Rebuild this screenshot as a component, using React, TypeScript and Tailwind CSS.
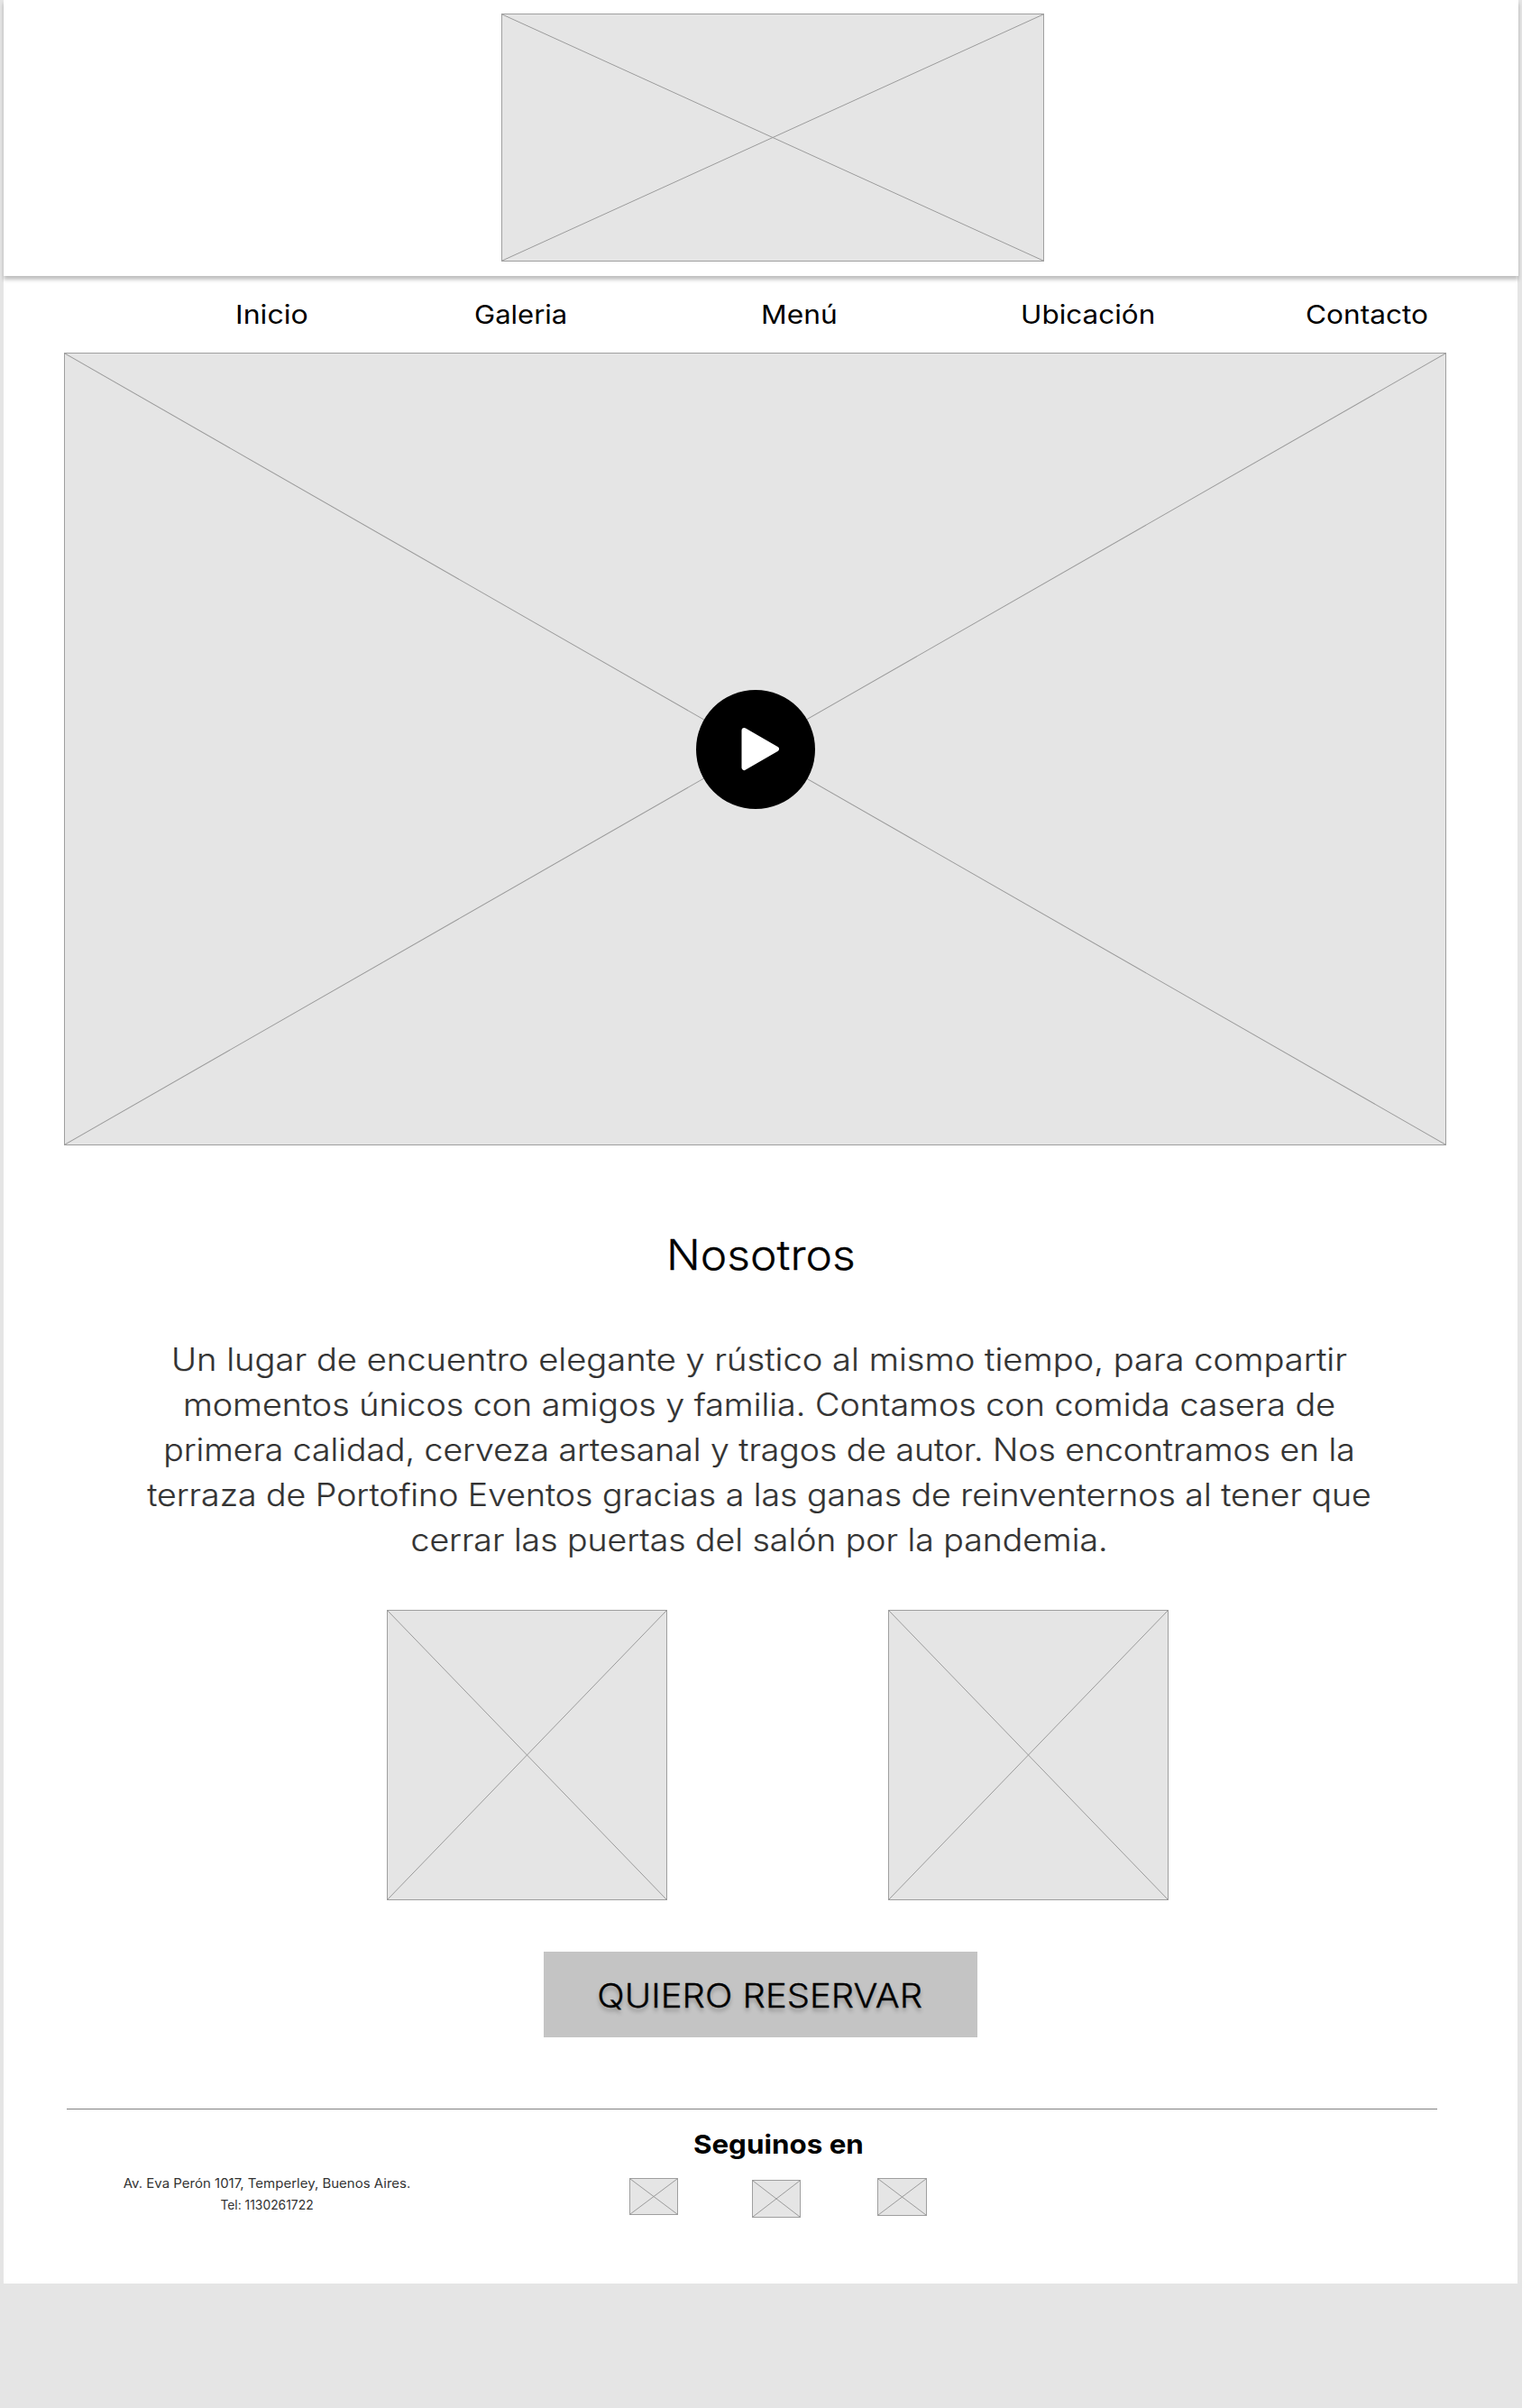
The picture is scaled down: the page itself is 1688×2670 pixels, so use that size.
import { clsx } from "clsx";

function Placeholder({ className }: { className: string }) {
  return (
    <div className={clsx("shrink-0 border border-[#9f9f9f] bg-[#e5e5e5]", className)}>
      <svg className="block h-full w-full" viewBox="0 0 100 100" preserveAspectRatio="none">
        <path d="M0 0L100 100M0 100L100 0" fill="none" stroke="#9b9b9b" strokeWidth="1" vectorEffect="non-scaling-stroke" />
      </svg>
    </div>
  );
}

const nav = [
  { label: "Inicio", stretch: "scale-x-[1.108]" },
  { label: "Galeria", stretch: "scale-x-[1.07]" },
  { label: "Menú", stretch: "scale-x-[1.095]" },
  { label: "Ubicación", stretch: "scale-x-[1.085]" },
  { label: "Contacto", stretch: "scale-x-[1.09]" },
];

const about = [
  { text: "Un lugar de encuentro elegante y rústico al mismo tiempo, para compartir", stretch: "scale-x-[1.089]" },
  { text: "momentos únicos con amigos y familia. Contamos con comida casera de", stretch: "scale-x-[1.076]" },
  { text: "primera calidad, cerveza artesanal y tragos de autor. Nos encontramos en la", stretch: "scale-x-[1.067]" },
  { text: "terraza de Portofino Eventos gracias a las ganas de reinventernos al tener que", stretch: "scale-x-[1.070]" },
  { text: "cerrar las puertas del salón por la pandemia.", stretch: "scale-x-[1.069]" },
];

export default function App() {
  return (
    <div className="h-[2670px] w-[1688px] overflow-hidden bg-[#e5e5e5] pl-1 font-['Inter',sans-serif] text-black">
      <div className="h-[2532px] w-[1679px] bg-white">
        <header className="h-[306px] w-[1680px] bg-white pt-[15px] shadow-[0_4px_4px_rgba(0,0,0,0.25)]">
          <Placeholder className="ml-[552px] h-[275px] w-[602px]" />
        </header>

        <nav className="grid h-[85px] grid-cols-[265px_318px_288px_316px_auto] justify-items-start pl-[257px] pt-[23px] text-[29px] leading-10">
          {nav.map((item) => (
            <a key={item.label} className={clsx("origin-left whitespace-nowrap", item.stretch)}>
              {item.label}
            </a>
          ))}
        </nav>

        <main className="flex flex-col">
          <div className="relative ml-[67px] h-[879px] w-[1533px]">
            <Placeholder className="h-full w-full" />
            <button className="absolute top-[374px] left-[701px] flex h-[132px] w-[132px] items-center justify-center rounded-full bg-black">
              <svg className="h-[132px] w-[132px]" viewBox="0 0 132 132">
                <path d="M53.5 45L89 65.5L53.5 86Z" fill="#fff" stroke="#fff" strokeWidth="6" strokeLinejoin="round" />
              </svg>
            </button>
          </div>

          <h1 className="mt-[93px] pl-px text-center text-[46px] leading-[56px] font-light [-webkit-text-stroke:0.3px]">
            <span className="inline-block scale-x-[1.082]">Nosotros</span>
          </h1>

          <p className="mt-[63px] pr-[3px] text-center text-[35px] leading-[50px] font-light text-[#333333] [-webkit-text-stroke:0.2px]">
            {about.map((line) => (
              <span key={line.text} className={clsx("block whitespace-nowrap", line.stretch)}>
                {line.text}
              </span>
            ))}
          </p>

          <div className="mt-[53px] ml-[425px] flex gap-[245px]">
            <Placeholder className="h-[322px] w-[311px]" />
            <Placeholder className="h-[322px] w-[311px]" />
          </div>

          <button className="mt-[57px] ml-[599px] h-[95px] w-[481px] bg-[#c4c4c4] pt-[2px] pr-[2px] text-[37px] font-light whitespace-nowrap text-shadow-[0_4px_4px_rgba(0,0,0,0.25)] [-webkit-text-stroke:0.3px]">
            <span className="inline-block scale-x-[1.082]">QUIERO RESERVAR</span>
          </button>
        </main>

        <footer className="mt-[79px] ml-[70px] flex w-[1520px] border-t border-[#828282]">
          <address className="mt-[70px] w-[444px] text-center text-[14px] leading-6 text-[#333333] not-italic">
            <span className="block scale-x-[1.071]">Av. Eva Perón 1017, Temperley, Buenos Aires.</span>
            <span className="block scale-x-[0.99]">Tel: 1130261722</span>
          </address>
          <section className="ml-[180px] w-[330px] pt-[19px]">
            <h2 className="text-center text-[29px] leading-10 font-bold">
              <span className="inline-block scale-x-[1.081]">Seguinos en</span>
            </h2>
            <div className="mt-[17px] flex items-start justify-between">
              <Placeholder className="h-[41px] w-[54px]" />
              <Placeholder className="mt-[2px] mr-[3px] h-[42px] w-[54px]" />
              <Placeholder className="h-[42px] w-[55px]" />
            </div>
          </section>
        </footer>
      </div>
    </div>
  );
}
